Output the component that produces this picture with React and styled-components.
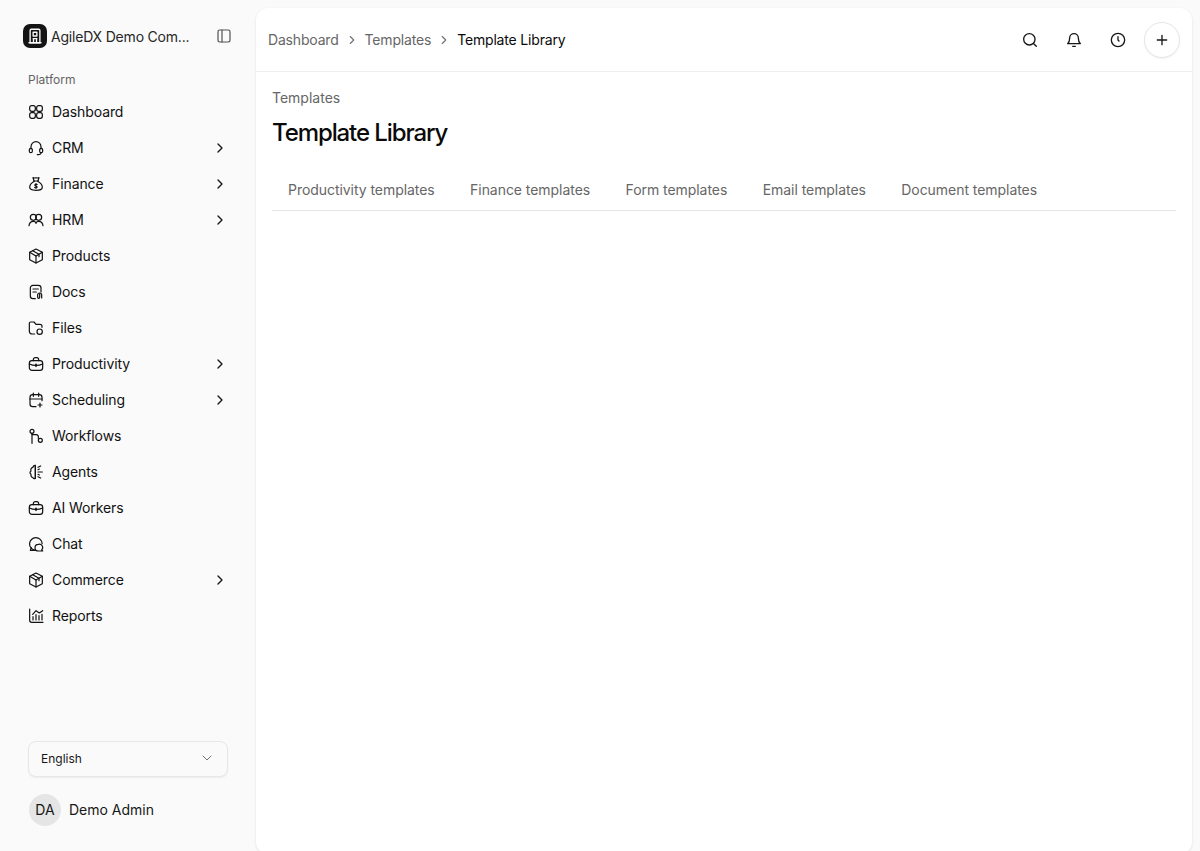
import React from "react";
import styled, { createGlobalStyle } from "styled-components";

const Global = createGlobalStyle`
  html, body { margin: 0; padding: 0; height: 100%; overflow: hidden; background: #fafafa; }
  #root { height: 100%; }
  * { box-sizing: border-box; }
  body { font-family: Inter, "Liberation Sans", sans-serif; color: #0a0a0a; }
`;

const Shell = styled.div`
  display: flex;
  height: 851px;
  overflow: hidden;
  background: #fafafa;
`;
const Sidebar = styled.aside`
  width: 256px;
  flex: none;
  display: flex;
  flex-direction: column;
`;
const Brand = styled.div`
  display: flex;
  align-items: center;
  height: 72px;
  padding: 0 24px 0 23px;
  gap: 4px;
`;
const Logo = styled.div`
  width: 24px;
  height: 24px;
  border-radius: 7px;
  background: #141414;
  color: #fafafa;
  display: flex;
  align-items: center;
  justify-content: center;
  flex: none;
`;
const BrandName = styled.span`
  font-size: 14px;
  letter-spacing: -0.2px;
  color: #262626;
  white-space: nowrap;
`;
const Toggle = styled.span`
  margin-left: auto;
  display: flex;
  color: #525252;
`;
const GroupLabel = styled.div`
  font-size: 12px;
  line-height: 16px;
  color: #646464;
  padding-left: 28px;
`;
const Nav = styled.nav`
  display: flex;
  flex-direction: column;
  margin-top: 5px;
  padding: 0 28px;
`;
const NavRow = styled.div`
  display: flex;
  align-items: center;
  height: 36px;
  gap: 8px;
  font-size: 14px;
  letter-spacing: -0.1px;
  color: #111111;
`;
const RowIcon = styled.span`
  display: flex;
  width: 16px;
  height: 16px;
  flex: none;
  margin-top: 1px;
`;
const Chevron = styled.span`
  display: flex;
  margin: 1px 0 0 auto;
  color: #171717;
`;
const Footer = styled.div`
  margin-top: auto;
  padding: 0 28px 25px;
  display: flex;
  flex-direction: column;
  gap: 17px;
`;
const Select = styled.div`
  height: 36px;
  border: 1px solid #e7e7e7;
  border-radius: 8px;
  background: #fafafa;
  box-shadow: 0 1px 2px rgba(0, 0, 0, 0.05);
  display: flex;
  align-items: center;
  justify-content: space-between;
  padding: 0 12px 2px;
  font-size: 12px;
  color: #171717;
`;
const SelectArrow = styled.span`
  display: flex;
  color: #737373;
`;
const User = styled.div`
  display: flex;
  align-items: center;
  gap: 8px;
  font-size: 14px;
  color: #171717;
  padding-left: 1px;
`;
const UserName = styled.span`
  margin-bottom: 2px;
`;
const Avatar = styled.div`
  width: 32px;
  height: 32px;
  border-radius: 50%;
  background: #e5e5e5;
  display: flex;
  align-items: center;
  justify-content: center;
  padding-bottom: 2px;
  font-size: 14px;
`;
const Main = styled.main`
  flex: 1;
  height: 846px;
  margin: 8px 8px 0 0;
  background: #fff;
  border-radius: 12px;
  box-shadow: 0 1px 3px rgba(0, 0, 0, 0.1);
  min-width: 0;
  display: flex;
  flex-direction: column;
`;
const Header = styled.header`
  height: 64px;
  flex: none;
  border-bottom: 1px solid #eeeeee;
  display: flex;
  align-items: center;
  justify-content: space-between;
  padding: 0 12px;
`;
const Crumbs = styled.div`
  display: flex;
  align-items: center;
  gap: 6px;
  font-size: 14px;
  letter-spacing: -0.18px;
  color: #666666;
`;
const CrumbSep = styled.span`
  display: flex;
  color: #737373;
`;
const CrumbCurrent = styled.span`
  color: #0a0a0a;
`;
const Actions = styled.div`
  display: flex;
  align-items: center;
  gap: 8px;
`;
const IconButton = styled.button`
  width: 36px;
  height: 36px;
  padding: 0;
  border-radius: 50%;
  border: ${(p) => (p.$outlined ? "1px solid #e5e5e5" : "none")};
  background: #fff;
  box-shadow: ${(p) => (p.$outlined ? "0 1px 2px rgba(0,0,0,.05)" : "none")};
  color: #171717;
  display: flex;
  align-items: center;
  justify-content: center;
`;
const Content = styled.section`
  padding: 16px;
`;
const Eyebrow = styled.div`
  font-size: 14px;
  line-height: 20px;
  color: #666666;
`;
const Title = styled.h1`
  margin: 9px 0 0;
  font-size: 24px;
  line-height: 32px;
  font-weight: 500;
  letter-spacing: -1.1px;
  color: #0a0a0a;
`;
const Tabs = styled.div`
  display: flex;
  margin-top: 24px;
  height: 38px;
  border-bottom: 1px solid #e5e5e5;
  gap: 3.4px;
`;
const Tab = styled.div`
  padding: 0 16px;
  font-size: 14px;
  letter-spacing: -0.05px;
  line-height: 34px;
  color: #666666;
  white-space: nowrap;
`;

const Ic = ({ size = 16, sw = 1.8, children }) => (
  <svg width={size} height={size} viewBox="0 0 24 24" fill="none" stroke="currentColor" strokeWidth={sw} strokeLinecap="round" strokeLinejoin="round">
    {children}
  </svg>
);

const icons = {
  dashboard: (<><rect x="2.500" y="2.500" width="8.500" height="8.500" rx="3" /><rect x="13" y="2.500" width="8.500" height="8.500" rx="3" /><rect x="2.500" y="13" width="8.500" height="8.500" rx="3" /><rect x="13" y="13" width="8.500" height="8.500" rx="3" /></>),
  crm: (<><path d="M4.500 13V10a7.500 7.500 0 0 1 15 0v3" /><rect x="2" y="12.500" width="4.500" height="6.500" rx="2.200" /><rect x="17.500" y="12.500" width="4.500" height="6.500" rx="2.200" /><path d="M20 19a4 4 0 0 1-4 3h-2" /></>),
  finance: (<><path d="M9 7.500 7.500 2.500c2 .8 3 .8 4.500 0 1.500.8 2.500.8 4.500 0L15 7.500" /><path d="M9 7.500h6" /><path d="M9.500 8c-3.500 2-7 5.500-7 9 0 3.500 3 4.500 9.500 4.500s9.500-1 9.500-4.500c0-3.500-3.500-7-7-9" /><path d="M13.700 12.700c-.8-.8-3.200-.8-3.400.8-.2 1.800 3.500 1.200 3.400 3-.1 1.500-2.700 1.600-3.700.6M12 11.500v7" /></>),
  hrm: (<><circle cx="8" cy="8" r="4.500" /><circle cx="16" cy="8" r="4.500" /><path d="M1.500 20.500c.5-4 3-6.500 6.500-6.500 2 0 3.500 1 4.500 2.500" /><path d="M11.500 16.500c1-1.500 2.500-2.500 4.500-2.500 3.500 0 6 2.500 6.500 6.500" /></>),
  box: (<><path d="M12 1.500 21.500 6.500v11L12 22.500 2.500 17.500v-11z" /><path d="M2.500 6.500 12 12l9.500-5.500" /><path d="M12 12v10.500" /><path d="M7 4l9.500 5.300V13" /></>),
  docs: (<><path d="M11 22H7.500a4 4 0 0 1-4-4V6a4 4 0 0 1 4-4h8a4 4 0 0 1 4 4v6" /><path d="M7.500 7.500h8M7.500 12h5" /><path d="M17.500 15v5a1.500 1.500 0 0 1-3 0v-3.500a3 3 0 0 1 6 0V21" /></>),
  files: (<><path d="M10 21H6a4 4 0 0 1-4-4V5a2 2 0 0 1 2-2h5l3 3.500h6a3 3 0 0 1 3 3V11" /><circle cx="17.500" cy="17.500" r="4" /></>),
  briefcase: (<><rect x="2" y="7" width="20" height="14.500" rx="4" /><path d="M8 7V5.500a3 3 0 0 1 3-3h2a3 3 0 0 1 3 3V7" /><path d="M2 12c3 1.500 6.500 2.200 10 2.200s7-.7 10-2.200" /><path d="M12 12.500v3" strokeWidth="2.400" /></>),
  calendar: (<><path d="M12 22H7a4 4 0 0 1-4-4V8a4 4 0 0 1 4-4h10a4 4 0 0 1 4 4v5" /><path d="M8 1.500v5M16 1.500v5M3 10.500h18" /><path d="M18 16.500v6M15 19.500h6" /></>),
  workflow: (<><circle cx="6" cy="5" r="3" /><circle cx="18.500" cy="18.500" r="3" /><path d="M6 8v15" /><path d="M6 10h6.500a3 3 0 0 1 3 3v2.500" /></>),
  agents: (<><path d="M11 2c-2.500 0-3.500 1.500-3.500 3-2.500.5-4 3-3 5.500C2.500 12 2.500 14 4.500 15.500c-.5 3 1 4.800 3 5 .5 1.200 2 1.800 3.500 1.200z" /><path d="M11 2v19.700" /><path d="M15 5l4-2M15 12h6.500M15 19l4 2M15 8.500l2-1M15 15.500l2 1" /></>),
  chat: (<><path d="M11 21.500a9.500 9.500 0 1 1 10.300-10" /><path d="M11 21.500H3.500L5 17.500" /><path d="M15.500 12.500a5 5 0 0 1 5 8.300l1.500 1.700H15.500a5 5 0 0 1 0-10z" /></>),
  reports: (<><path d="M2.500 1.500v17a3 3 0 0 0 3 3H22.500" /><path d="M7 9.500l5-5.500 5 3.500 5-3.500" /><path d="M7.500 13v5M12 10v8M16.500 11.500V18M21 9.500V18" /></>)
};

const items = [
  ["Dashboard", "dashboard"], ["CRM", "crm", 1], ["Finance", "finance", 1], ["HRM", "hrm", 1],
  ["Products", "box"], ["Docs", "docs"], ["Files", "files"], ["Productivity", "briefcase", 1],
  ["Scheduling", "calendar", 1], ["Workflows", "workflow"], ["Agents", "agents"], ["AI Workers", "briefcase"],
  ["Chat", "chat"], ["Commerce", "box", 1], ["Reports", "reports"]
];

const tabs = ["Productivity templates", "Finance templates", "Form templates", "Email templates", "Document templates"];

const ChevronGlyph = ({ size = 16 }) => (
  <Ic size={size} sw={2}><path d="m9 6 6 6-6 6" /></Ic>
);

export default function App() {
  return (
    <>
      <Global />
      <Shell>
        <Sidebar>
          <Brand>
            <Logo>
              <Ic size={18} sw={1.8}>
                <path d="M5.500 21V4.500A1.500 1.500 0 0 1 7 3h10a1.500 1.500 0 0 1 1.500 1.500V21z" />
                <path d="M9.500 7h5v5h-5zM4 21h16M9.500 15.500h5M10 21v-5.500M14 21v-5.500" />
              </Ic>
            </Logo>
            <BrandName>AgileDX Demo Com...</BrandName>
            <Toggle>
              <Ic size={16} sw={1.8}>
                <rect x="3" y="3" width="18" height="18" rx="2.500" />
                <path d="M9 3v18" />
              </Ic>
            </Toggle>
          </Brand>
          <GroupLabel>Platform</GroupLabel>
          <Nav>
            {items.map(([label, icon, more]) => (
              <NavRow key={label}>
                <RowIcon><Ic>{icons[icon]}</Ic></RowIcon>
                {label}
                {more ? <Chevron><ChevronGlyph /></Chevron> : null}
              </NavRow>
            ))}
          </Nav>
          <Footer>
            <Select>
              English
              <SelectArrow>
                <Ic size={16} sw={1.5}><path d="m6 9 6 6 6-6" /></Ic>
              </SelectArrow>
            </Select>
            <User>
              <Avatar>DA</Avatar>
              <UserName>Demo Admin</UserName>
            </User>
          </Footer>
        </Sidebar>
        <Main>
          <Header>
            <Crumbs>
              <span>Dashboard</span>
              <CrumbSep><ChevronGlyph size={14} /></CrumbSep>
              <span>Templates</span>
              <CrumbSep><ChevronGlyph size={14} /></CrumbSep>
              <CrumbCurrent>Template Library</CrumbCurrent>
            </Crumbs>
            <Actions>
              <IconButton>
                <Ic size={16} sw={2}><circle cx="11" cy="11" r="8.500" /><path d="m21.500 21.500-4.300-4.300" /></Ic>
              </IconButton>
              <IconButton>
                <Ic size={16} sw={2}><path d="M5.500 9a6.500 6.500 0 0 1 13 0c0 5 1.500 7 3 8.500h-19c1.500-1.500 3-3.500 3-8.500" /><path d="M10 21.500h4" /></Ic>
              </IconButton>
              <IconButton>
                <Ic size={16} sw={2}><circle cx="12" cy="12" r="10" /><path d="M12 7v5l1.500 1.500" /></Ic>
              </IconButton>
              <IconButton $outlined>
                <Ic size={16} sw={2}><path d="M5 12h14M12 5v14" /></Ic>
              </IconButton>
            </Actions>
          </Header>
          <Content>
            <Eyebrow>Templates</Eyebrow>
            <Title>Template Library</Title>
            <Tabs>
              {tabs.map((t) => <Tab key={t}>{t}</Tab>)}
            </Tabs>
          </Content>
        </Main>
      </Shell>
    </>
  );
}
